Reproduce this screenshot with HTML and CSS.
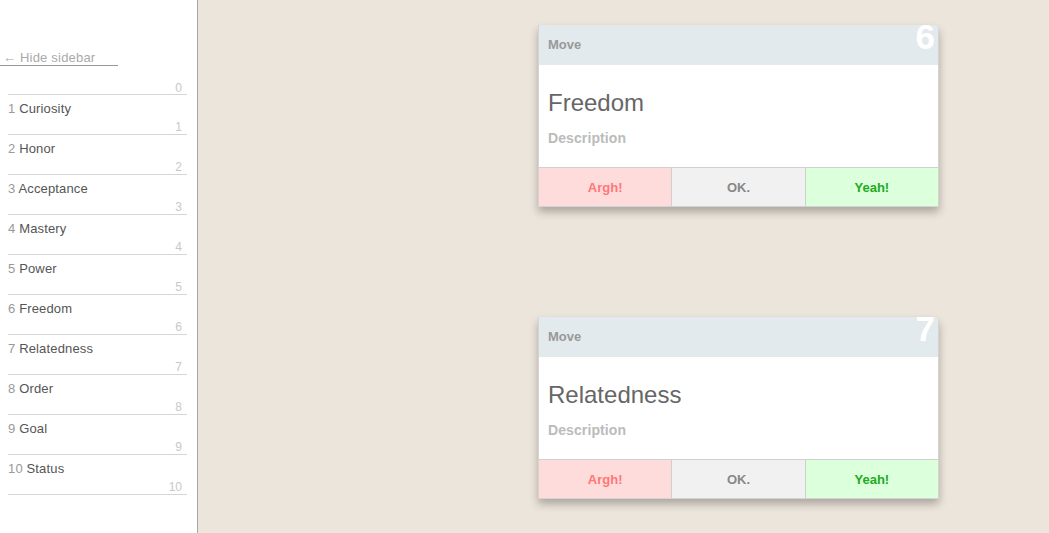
FILE: index.html
```html
<!DOCTYPE html>
<html>
<head>
<meta charset="utf-8">
<link rel="stylesheet" href="styles.css">
</head>
<body>
<div class="app">
  <aside class="sidebar">
    <a class="hide-link">← Hide sidebar</a>
    <ul class="list">
      <li class="item item-zero"><div class="num">0</div></li>
      <li class="item"><div class="title"><span class="idx">1</span> Curiosity</div><div class="num">1</div></li>
      <li class="item"><div class="title"><span class="idx">2</span> Honor</div><div class="num">2</div></li>
      <li class="item"><div class="title"><span class="idx">3</span> Acceptance</div><div class="num">3</div></li>
      <li class="item"><div class="title"><span class="idx">4</span> Mastery</div><div class="num">4</div></li>
      <li class="item"><div class="title"><span class="idx">5</span> Power</div><div class="num">5</div></li>
      <li class="item"><div class="title"><span class="idx">6</span> Freedom</div><div class="num">6</div></li>
      <li class="item"><div class="title"><span class="idx">7</span> Relatedness</div><div class="num">7</div></li>
      <li class="item"><div class="title"><span class="idx">8</span> Order</div><div class="num">8</div></li>
      <li class="item"><div class="title"><span class="idx">9</span> Goal</div><div class="num">9</div></li>
      <li class="item"><div class="title"><span class="idx">10</span> Status</div><div class="num">10</div></li>
    </ul>
  </aside>
  <main class="board">
    <div class="card">
      <div class="card-head"><span class="kind">Move</span><span class="badge">6</span></div>
      <div class="card-body">
        <div class="card-title">Freedom</div>
        <div class="card-desc">Description</div>
      </div>
      <div class="card-actions">
        <button class="btn btn-argh">Argh!</button>
        <button class="btn btn-ok">OK.</button>
        <button class="btn btn-yeah">Yeah!</button>
      </div>
    </div>
    <div class="card">
      <div class="card-head"><span class="kind">Move</span><span class="badge">7</span></div>
      <div class="card-body">
        <div class="card-title">Relatedness</div>
        <div class="card-desc">Description</div>
      </div>
      <div class="card-actions">
        <button class="btn btn-argh">Argh!</button>
        <button class="btn btn-ok">OK.</button>
        <button class="btn btn-yeah">Yeah!</button>
      </div>
    </div>
  </main>
</div>
</body>
</html>
```
FILE: styles.css
```css
* { box-sizing: border-box; }
html, body { margin: 0; padding: 0; height: 100%; }
body {
  font-family: "Liberation Sans", Arial, sans-serif;
  background: #ece5db;
  overflow: hidden;
}
.app { display: flex; height: 533px; }
.sidebar {
  width: 198px;
  flex: none;
  background: #fff;
  border-right: 1px solid #a9a7a3;
  padding-top: 50px;
}
.hide-link {
  display: block;
  width: 118px;
  padding-left: 3px;
  font-size: 13px;
  line-height: 15px;
  color: #aaa;
  letter-spacing: 0.2px;
  border-bottom: 1px solid #999;
}
.list { list-style: none; margin: 0 0 0 8px; padding: 0; width: 179px; }
.item {
  border-bottom: 1px solid #d6d6d6;
  padding: 6px 0 1px;
}
.item-zero { padding: 16px 0 0; }
.title { font-size: 13px; line-height: 16px; color: #555; letter-spacing: 0.15px; }
.idx { color: #999; }
.num {
  font-size: 12px;
  line-height: 12px;
  color: #c8c8c8;
  text-align: right;
  padding-right: 5px;
  margin-top: 4px;
}
.item-zero .num { margin-top: 0; }
.board {
  flex: 1;
  padding: 25px 0 0 340px;
  display: flex;
  flex-direction: column;
  gap: 110px;
}
.card {
  width: 401px;
  background: #fff;
  border: 1px solid #d4d4d4;
  border-top: none;
  border-radius: 0 5px 0 0;
  box-shadow: 0 5px 8px rgba(0,0,0,0.28);
}
.card-head {
  position: relative;
  height: 40px;
  background: #e2eaed;
  border-radius: 0 4px 0 0;
  display: flex;
  align-items: center;
  padding: 0 0 2px 9px;
}
.kind { font-size: 13px; font-weight: bold; color: #999; }
.badge {
  position: absolute;
  right: 3px;
  top: -8px;
  font-size: 35px;
  font-weight: bold;
  color: #fff;
  line-height: 40px;
}
.card-body { height: 102px; padding: 23px 9px 0; }
.card-title { font-size: 24px; line-height: 30px; color: #666; }
.card-desc { font-size: 14px; font-weight: bold; color: #bbb; margin-top: 12px; line-height: 16px; letter-spacing: 0.1px; }
.card-actions { display: flex; }
.btn {
  flex: 1;
  height: 39px;
  margin: 0;
  border: 1px solid #d0d0d0;
  border-bottom: none;
  font-family: inherit;
  font-size: 13px;
  font-weight: bold;
  padding: 0;
}
.btn-argh { background: #ffdcdc; color: #f77; border-left: none; }
.btn-ok { background: #f1f1f1; color: #888; border-left: none; }
.btn-yeah { background: #dcffdc; color: #22aa22; border-left: none; border-right: none; }
```
